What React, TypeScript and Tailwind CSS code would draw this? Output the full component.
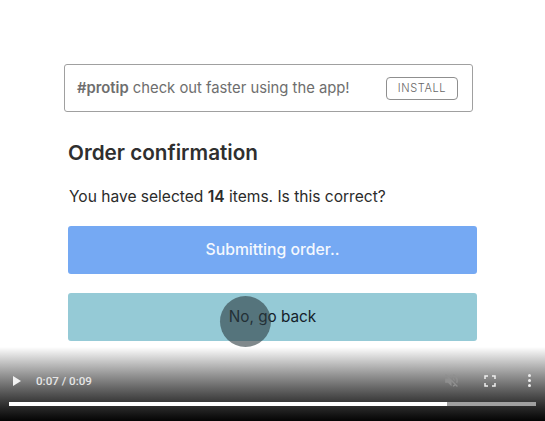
export default function App() {
  return (
    <div className="relative h-[421px] w-[545px] overflow-hidden bg-white font-['Inter',sans-serif]">
      <div className="pl-[64px] pt-[64px]">
        {/* Install banner */}
        <div className="flex h-[48px] w-[409px] items-center justify-between rounded-[3px] border border-[#a0a0a0] pl-[12px] pr-[14px] text-[14.8px] text-[#6e6e6e]">
          <span>
            <b className="font-semibold">#protip</b> check out faster using the app!
          </span>
          <span className="flex h-[23px] w-[72px] items-center justify-center rounded-[4px] border border-[#8f8f8f] text-[11px] font-light tracking-[0.6px] text-[#666666]">
            INSTALL
          </span>
        </div>

        <div className="pl-[4px]">
          <h1 className="mt-[26px] text-[20.7px] font-semibold leading-[30px] text-[#2f2f2f]">Order confirmation</h1>
          <p className="ml-[1px] mt-[17px] text-[15.55px] leading-[24px] text-[#2b2b2b]">
            You have selected <b className="font-semibold">14</b> items. Is this correct?
          </p>
          <div className="mt-[17px] flex h-[48px] w-[409px] items-center justify-center rounded-[3px] bg-[#75a9f3] text-[15.75px] font-medium text-[#f4f8fe]">
            Submitting order..
          </div>
          <div className="mt-[19px] flex h-[48px] w-[409px] items-center justify-center rounded-[3px] bg-[#95cad6] text-[15.3px] text-[#14212a]">
            No, go back
          </div>
        </div>
      </div>

      {/* Tap indicator */}
      <div className="absolute left-[220px] top-[296px] h-[51px] w-[51px] rounded-full bg-[#2c3a40]/60" />

      {/* Video controls */}
      <div className="absolute inset-x-0 bottom-0 h-[74px] bg-gradient-to-b from-white/90 to-[#050505]">
        <div className="flex h-[55px] items-end pb-[14px] pl-[12px] pr-[14px]">
          <svg width="10" height="12" viewBox="0 0 10 12" className="mb-[1px]">
            <path d="M1 1v10l8-5z" fill="#f2f2f2" />
          </svg>
          <span className="ml-[14px] font-['Roboto',sans-serif] text-[11.6px] font-medium leading-[14px] text-[#e6e6e6]">0:07 / 0:09</span>
          <svg width="17" height="17" viewBox="0 0 24 24" className="ml-auto mr-[24px] -mb-[1px] text-[#8f8f8f]" fill="currentColor">
            <path d="M16.5 12c0-1.770-1.020-3.290-2.500-4.030v2.210l2.450 2.450c.030-.2.050-.410.050-.630zm2.500 0c0 .940-.2 1.820-.540 2.640l1.510 1.510C20.630 14.910 21 13.500 21 12c0-4.280-2.990-7.860-7-8.770v2.060c2.890.860 5 3.540 5 6.710zM4.270 3L3 4.270 7.730 9H3v6h4l5 5v-6.730l4.250 4.250c-.670.520-1.420.930-2.250 1.180v2.060c1.380-.310 2.630-.950 3.690-1.810L19.730 21 21 19.730l-9-9L4.270 3zM12 4L9.910 6.090 12 8.180V4z" />
          </svg>
          <svg width="12" height="12" viewBox="0 0 12 12" className="mr-[32px] mb-[1px]" fill="none" stroke="#eeeeee" strokeWidth="1.500">
            <path d="M1 4V1h3M8 1h3v3M11 8v3H8M4 11H1V8" />
          </svg>
          <div className="mb-[1px] flex flex-col gap-[2px]">
            <span className="h-[3px] w-[3px] rounded-full bg-[#eeeeee]" />
            <span className="h-[3px] w-[3px] rounded-full bg-[#eeeeee]" />
            <span className="h-[3px] w-[3px] rounded-full bg-[#eeeeee]" />
          </div>
        </div>
        <div className="ml-[9px] h-[4px] w-[527px] bg-[#a0a0a0]">
          <div className="h-full w-[438px] bg-white" />
        </div>
      </div>
    </div>
  );
}
